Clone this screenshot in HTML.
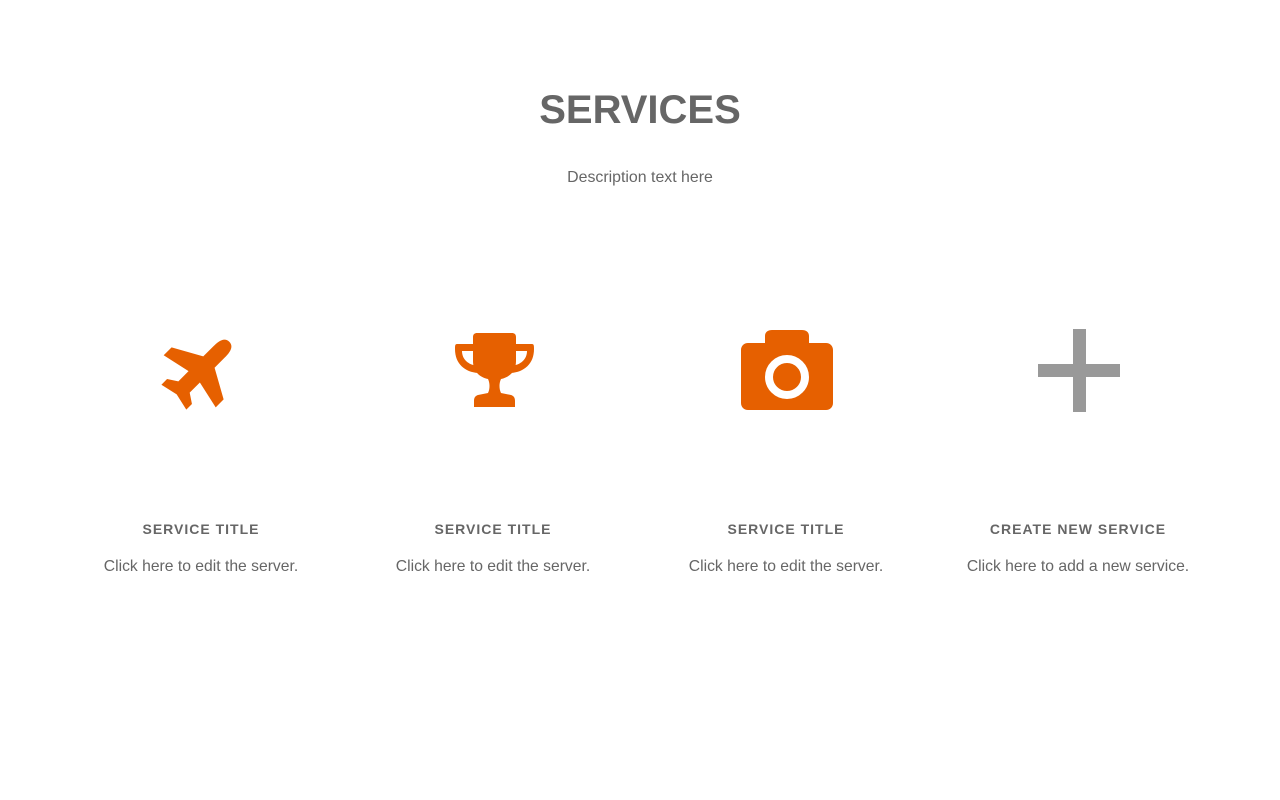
<!DOCTYPE html>
<html><head><meta charset="utf-8"><style>
body{margin:0;width:1280px;height:800px;background:#fff;font-family:"Liberation Sans",sans-serif;color:#666;position:relative;overflow:hidden}
.a{position:absolute;text-align:center;white-space:nowrap}
h1{position:absolute;left:0;width:1280px;top:86px;margin:0;text-align:center;font-size:40px;font-weight:bold;color:#666;line-height:48px}
.d{left:0;width:1280px;top:168px;font-size:15.9px;line-height:20px}
.t{top:520px;width:300px;font-size:14px;font-weight:bold;letter-spacing:1px;line-height:18px}
.s{top:557px;width:300px;font-size:15.7px;line-height:20px}
svg{position:absolute}
</style></head><body>
<h1>SERVICES</h1>
<div class="a d">Description text here</div>

<svg style="left:161px;top:330px" width="80" height="80" viewBox="0 0 100 100">
<g transform="rotate(45 50 50)" fill="#e66000">
<path d="M50 0 C59 0 60 10 60 18 L60 36 L96 56 L96 70 L60 62 L60 80 L72 88 L72 98 L50 93 L28 98 L28 88 L40 80 L40 62 L4 70 L4 56 L40 36 L40 18 C40 10 41 0 50 0 Z"/>
</g></svg>

<svg style="left:455px;top:333px" width="79" height="74" viewBox="0 0 79 74" fill="#e66000">
<path d="M18 4 C18 1 20 0 22 0 L57 0 C59 0 61 1 61 4 L61 28 C61 38 55 44 46 46 C44 50 44 56 46 60 L56 62 C59 63 60 65 60 68 L60 74 L19 74 L19 68 C19 65 20 63 23 62 L33 60 C35 56 35 50 33 46 C24 44 18 38 18 28 Z"/>
<path d="M18 11 L2 11 C0 11 0 13 0 16 C0 31 10 39 23 40 L23 33 C13 32 7 26 7 18 L18 18 Z"/>
<path d="M61 11 L77 11 C79 11 79 13 79 16 C79 31 69 39 56 40 L56 33 C66 32 72 26 72 18 L61 18 Z"/>
</svg>

<svg style="left:741px;top:330px" width="92" height="80" viewBox="0 0 92 80">
<path fill="#e66000" d="M24 13 L24 6 C24 2 27 0 31 0 L61 0 C65 0 68 2 68 6 L68 13 L85 13 C89 13 92 16 92 20 L92 73 C92 77 89 80 85 80 L7 80 C3 80 0 77 0 73 L0 20 C0 16 3 13 7 13 Z"/>
<circle cx="46" cy="47" r="18" fill="none" stroke="#fff" stroke-width="8"/>
</svg>

<svg style="left:1038px;top:329px" width="82" height="83" viewBox="0 0 82 83" fill="#999">
<rect x="35" y="0" width="13" height="83"/>
<rect x="0" y="35" width="82" height="13"/>
</svg>

<div class="a t" style="left:51px">SERVICE TITLE</div>
<div class="a t" style="left:343px">SERVICE TITLE</div>
<div class="a t" style="left:636px">SERVICE TITLE</div>
<div class="a t" style="left:928px">CREATE NEW SERVICE</div>
<div class="a s" style="left:51px">Click here to edit the server.</div>
<div class="a s" style="left:343px">Click here to edit the server.</div>
<div class="a s" style="left:636px">Click here to edit the server.</div>
<div class="a s" style="left:928px">Click here to add a new service.</div>
</body></html>
